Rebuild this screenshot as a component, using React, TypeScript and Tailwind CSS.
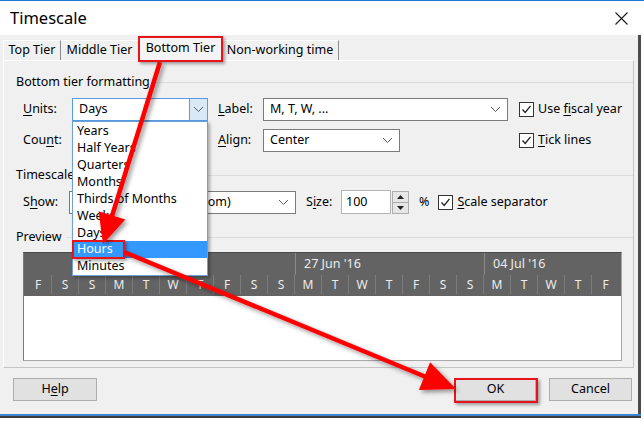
import type { ReactNode } from 'react';

const units = ['Years', 'Half Years', 'Quarters', 'Months', 'Thirds of Months', 'Weeks', 'Days', 'Hours', 'Minutes'];
const days = ['F', 'S', 'S', 'M', 'T', 'W', 'T', 'F', 'S', 'S', 'M', 'T', 'W', 'T', 'F', 'S', 'S', 'M', 'T', 'W', 'T', 'F'];

function Chevron() {
  return (
    <svg width="11" height="7" viewBox="0 0 11 7" className="shrink-0">
      <polyline points="1,1 5.5,5.5 10,1" fill="none" stroke="#5a5a5a" strokeWidth="1" />
    </svg>
  );
}

function Combo({ className, children }: { className: string; children?: ReactNode }) {
  return (
    <div className={`flex h-[23px] items-center border border-[#7a7a7a] bg-white pl-[6px] pr-[6px] ${className}`}>
      <span className="flex-1 truncate whitespace-nowrap">{children}</span>
      <Chevron />
    </div>
  );
}

function Check({ children }: { children: ReactNode }) {
  return (
    <div className="flex items-center gap-[4px] whitespace-nowrap">
      <span className="flex h-[15px] w-[15px] items-center justify-center border border-[#333] bg-white">
        <svg width="11" height="11" viewBox="0 0 11 11">
          <polyline points="1.5,5.5 4.2,8.5 9.5,1.8" fill="none" stroke="#222" strokeWidth="1.3" />
        </svg>
      </span>
      <span>{children}</span>
    </div>
  );
}

function Section({ title, className }: { title: string; className: string }) {
  return (
    <div className={`flex h-[16px] items-center pl-[12px] ${className}`}>
      <span className="whitespace-nowrap">{title}</span>
      <div className="ml-[6px] h-px flex-1 bg-[#dcdcdc]" />
    </div>
  );
}

function Button({ className, children }: { className: string; children: ReactNode }) {
  return (
    <div className={`flex h-[23px] items-center justify-center border border-[#adadad] bg-[#e1e1e1] ${className}`}>
      {children}
    </div>
  );
}

export default function App() {
  return (
    <div className="relative h-[424px] w-[644px] overflow-hidden bg-white text-[12.5px] leading-none text-black [font-family:'Noto_Sans',sans-serif]">
      <div className="h-px bg-[#1f7ad3]" />
      <div className="flex h-[34px] items-center justify-between pl-[10px] pr-[16px]">
        <span className="text-[16.5px]">Timescale</span>
        <svg width="13" height="13" viewBox="0 0 13 13">
          <path d="M0.5 0.5 L12.5 12.5 M12.5 0.5 L0.5 12.5" stroke="#1a1a1a" strokeWidth="1.1" />
        </svg>
      </div>

      <div className="flex h-[379px] w-[641px] flex-col border-r-[3px] border-[#4b4b4b] bg-[#f0f0f0]">
        {/* tabs */}
        <div className="flex h-[25px] items-end pl-[3px]">
          <div className="flex h-[20px] w-[58px] items-center justify-center border-l border-t border-r border-l-white border-t-white border-r-[#8c8c8c]">Top Tier</div>
          <div className="flex h-[20px] w-[78px] items-center justify-center border-t border-r border-t-white border-r-[#8c8c8c]">Middle Tier</div>
          <div className="relative z-10 mb-[-1px] flex h-[25px] w-[83px] items-center justify-center border-l border-t border-r border-l-white border-t-white border-r-[#8c8c8c] bg-[#f4f4f4] pb-[2px]">Bottom Tier</div>
          <div className="flex h-[20px] w-[117px] items-center justify-center border-t border-r border-t-white border-r-[#8c8c8c]">Non-working time</div>
        </div>

        {/* panel */}
        <div className="ml-[3px] flex h-[308px] w-[631px] flex-col border border-l-white border-t-white border-r-[#c4c4c4] border-b-[#c4c4c4] pt-[13px]">
          <Section title="Bottom tier formatting" className="" />

          <div className="mt-[8px] flex h-[23px] items-center pl-[19px]">
            <span className="w-[49px]"><span className="underline underline-offset-2">U</span>nits:</span>
            <div className="flex h-[23px] w-[136px] items-center border border-[#569de5] bg-white pl-[6px]">
              <span className="flex-1">Days</span>
              <div className="flex h-full w-[18px] items-center justify-center border-l border-[#569de5] bg-[#d9e8f7]">
                <Chevron />
              </div>
            </div>
            <span className="ml-[10px] w-[45px]"><span className="underline underline-offset-2">L</span>abel:</span>
            <Combo className="w-[245px]">M, T, W, ...</Combo>
            <div className="ml-[11px]">
              <Check>Use <span className="underline underline-offset-2">f</span>iscal year</Check>
            </div>
          </div>

          <div className="mt-[8px] flex h-[23px] items-center pl-[19px]">
            <span className="w-[49px]">Cou<span className="underline underline-offset-2">n</span>t:</span>
            <div className="h-[23px] w-[136px] border border-[#7a7a7a] bg-white" />
            <span className="ml-[10px] w-[45px]"><span className="underline underline-offset-2">A</span>lign:</span>
            <Combo className="w-[137px]">Center</Combo>
            <div className="ml-[119px]">
              <Check><span className="underline underline-offset-2">T</span>ick lines</Check>
            </div>
          </div>

          <Section title="Timescale options" className="mt-[15px]" />

          <div className="mt-[7px] flex h-[24px] items-center pl-[19px]">
            <span className="w-[46px]">S<span className="underline underline-offset-2">h</span>ow:</span>
            <Combo className="w-[227px]">Two tiers (Middle, Bottom)</Combo>
            <span className="ml-[10px] w-[35px]">S<span className="underline underline-offset-2">i</span>ze:</span>
            <div className="flex h-[24px] w-[50px] items-center border border-[#b4b4b4] bg-white pl-[4px]">100</div>
            <div className="ml-[1px] flex h-[23px] w-[17px] flex-col border border-[#adadad] bg-[#e6e6e6]">
              <div className="flex flex-1 items-center justify-center border-b border-[#adadad]">
                <svg width="7" height="4" viewBox="0 0 7 4"><polygon points="0,4 7,4 3.5,0" fill="#222" /></svg>
              </div>
              <div className="flex flex-1 items-center justify-center">
                <svg width="7" height="4" viewBox="0 0 7 4"><polygon points="0,0 7,0 3.5,4" fill="#222" /></svg>
              </div>
            </div>
            <span className="ml-[10px]">%</span>
            <div className="ml-[9px]">
              <Check><span className="underline underline-offset-2">S</span>cale separator</Check>
            </div>
          </div>

          <Section title="Preview" className="mt-[15px]" />

          <div className="ml-[19px] mt-[7px] flex h-[109px] w-[599px] flex-col border border-[#a8a8a8] border-t-[#4a4a4a] border-l-[#7a7a7a] bg-white">
            <div className="flex h-[43px] flex-col bg-[#636363] pl-[1px] text-[#ececec]">
              <div className="flex h-[22px]">
                <div className="w-[81px]" />
                <div className="flex w-[189px] items-center border-l border-[#8a8a8a] pl-[8px]">20 Jun '16</div>
                <div className="flex w-[189px] items-center border-l border-[#8a8a8a] pl-[8px]">27 Jun '16</div>
                <div className="flex flex-1 items-center border-l border-[#8a8a8a] pl-[8px]">04 Jul '16</div>
              </div>
              <div className="flex h-[21px] pb-[2px]">
                {days.map((d, i) => (
                  <div
                    key={i}
                    className={`flex w-[27px] items-center justify-center text-[12px] ${i < days.length - 1 ? 'border-r border-[#7c7c7c]' : ''}`}
                  >
                    {d}
                  </div>
                ))}
              </div>
            </div>
            <div className="flex-1 bg-white" />
          </div>
        </div>

        {/* buttons */}
        <div className="mt-[10px] flex items-center pr-[6px]">
          <Button className="ml-[13px] w-[84px]">H<span className="underline underline-offset-2">e</span>lp</Button>
          <Button className="ml-auto w-[81px]">OK</Button>
          <Button className="ml-[13px] w-[83px]">Cancel</Button>
        </div>
      </div>
      <div className="h-[2px] w-[641px] bg-[#3b83d0]" />
      <div className="h-[2px] w-[641px] bg-[#3c3c3c]" />

      {/* open dropdown list */}
      <div className="absolute left-[72px] top-[121px] z-20 flex h-[155px] w-[136px] flex-col border border-[#6e9fd6] bg-white pt-[1px] shadow-[2px_2px_3px_rgba(0,0,0,0.3)]">
        {units.map((u) => (
          <div
            key={u}
            className={`flex h-[17px] items-center whitespace-nowrap pl-[4px] ${u === 'Hours' ? 'bg-[#3399ff] text-white' : ''}`}
          >
            {u}
          </div>
        ))}
      </div>

      {/* annotations */}
      <div className="absolute left-[138px] top-[36px] z-30 h-[26px] w-[85px] border-2 border-[#e8141b] shadow-[2px_2px_3px_rgba(0,0,0,0.35)]" />
      <div className="absolute left-[72px] top-[240px] z-30 h-[19px] w-[53px] border-2 border-[#e8141b] shadow-[2px_2px_3px_rgba(0,0,0,0.35)]" />
      <div className="absolute left-[454px] top-[378px] z-30 h-[25px] w-[84px] border-2 border-[#e8141b] shadow-[2px_2px_3px_rgba(0,0,0,0.35)]" />

      <svg className="pointer-events-none absolute left-0 top-0 z-40" width="644" height="424" viewBox="0 0 644 424">
        <defs>
          <filter id="sh" x="-20%" y="-20%" width="140%" height="140%">
            <feDropShadow dx="2.5" dy="2.5" stdDeviation="2" floodColor="#000" floodOpacity="0.4" />
          </filter>
        </defs>
        <g filter="url(#sh)" fill="#ff0000" stroke="#ff0000">
          <line x1="160" y1="62" x2="112" y2="216" strokeWidth="4.5" />
          <polygon points="103,244 125.3,219.6 98.6,211.2" stroke="none" />
          <line x1="124" y1="252" x2="426" y2="377" strokeWidth="4.5" />
          <polygon points="456,389 418.9,390.1 430.1,362.3" stroke="none" />
        </g>
      </svg>
    </div>
  );
}
